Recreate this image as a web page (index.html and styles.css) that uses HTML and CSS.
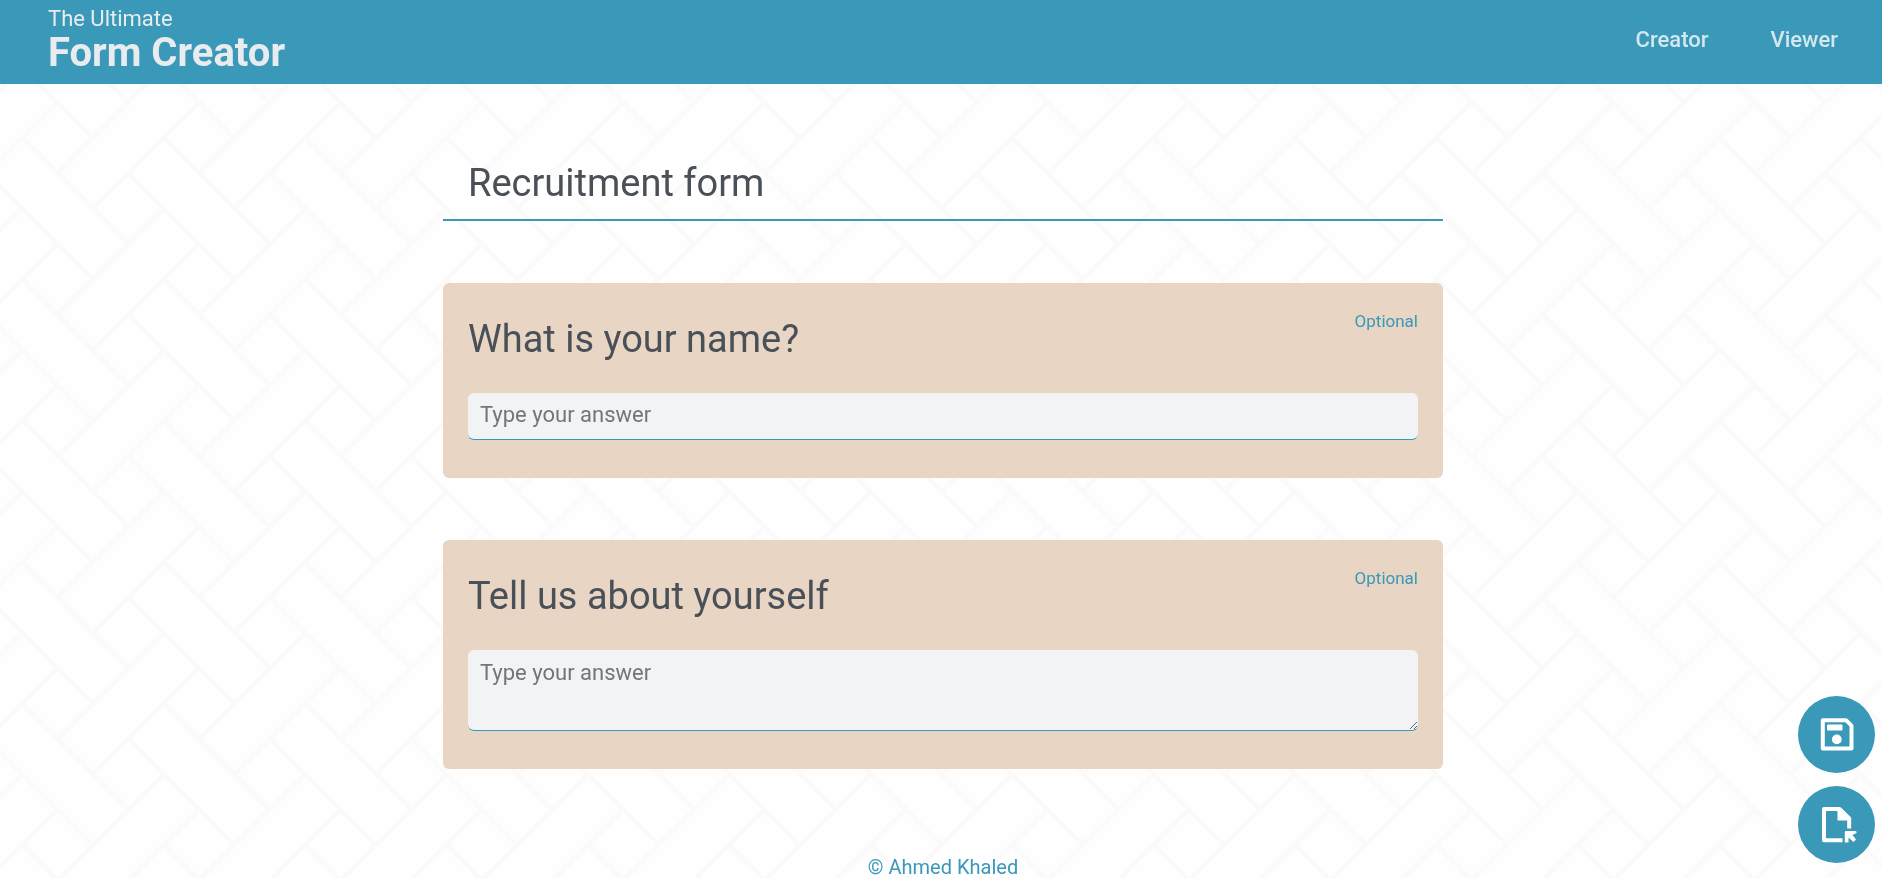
FILE: index.html
```html
<!DOCTYPE html>
<html lang="en">
<head>
<meta charset="utf-8">
<meta name="viewport" content="width=device-width, initial-scale=1">
<title>The Ultimate Form Creator</title>
<link rel="stylesheet" href="styles.css">
</head>
<body>
<svg class="backdrop" aria-hidden="true">
  <defs>
    <pattern id="weave" width="100" height="100" patternUnits="userSpaceOnUse" patternTransform="translate(128.3 31.7) scale(1.41421)">
      <path d="M0 0L75 75M25 75L100 150M25 -25L100 50M-25 25L50 -50M-25 125L50 50M75 25L150 -50M75 125L150 50M-50 100L25 25M50 100L125 25M100 100L175 175" />
    </pattern>
  </defs>
  <rect width="100%" height="100%" fill="url(#weave)" />
</svg>
<header class="header">
  <a class="logo" href="#"><span class="logo-small">The Ultimate</span><span class="logo-big">Form Creator</span></a>
  <nav class="nav"><a href="#">Creator</a><a href="#">Viewer</a></nav>
</header>
<main class="main">
  <form class="form" id="form">
    <h1 class="title">Recruitment form</h1>
    <section class="card">
      <div class="card-head"><label class="question" for="name">What is your name?</label><span class="hint">Optional</span></div>
      <input class="answer" id="name" type="text" placeholder="Type your answer">
    </section>
    <section class="card">
      <div class="card-head"><label class="question" for="about">Tell us about yourself</label><span class="hint">Optional</span></div>
      <textarea class="answer answer-long" id="about" rows="2" placeholder="Type your answer"></textarea>
    </section>
  </form>
</main>
<footer class="footer">© Ahmed Khaled</footer>
<div class="actions">
  <button class="action" type="submit" form="form" aria-label="Save">
    <svg viewBox="0 0 50 50"><path class="line" d="M10.800 10.200H34L39.500 15.700V38.500H10.800Z" /><rect x="15" y="14.500" width="15.500" height="6" rx="1" /><circle cx="24.800" cy="29.400" r="4.900" /></svg>
  </button>
  <button class="action" type="button" aria-label="Export">
    <svg viewBox="0 0 50 50"><path class="line" d="M30.500 40.200H12V9H27.500L37.200 18.500V28.500" /><path d="M25.500 8H29L38.800 18V20.500H25.500Z" /><path d="M34 31H43.500Q44.800 31 44.500 33L40.500 35L44 39.500L41.500 42L36.500 37.500V42.500H32.800V32.200Q32.800 31 34 31Z" /></svg>
  </button>
</div>
</body>
</html>
```
FILE: styles.css
```css
* {
  box-sizing: border-box;
}

body {
  margin: 0;
  background: #fefefe;
  color: #495057;
  font-family: Roboto, "Liberation Sans", sans-serif;
}

.backdrop {
  position: fixed;
  inset: 0;
  z-index: -1;
  width: 100%;
  height: 100%;
}

.backdrop path {
  fill: none;
  stroke: #fafafa;
  stroke-width: 3;
}

.header {
  display: flex;
  justify-content: space-between;
  padding: 5px 44px 11px 48px;
  background: #3a98b9;
}

.logo {
  display: flex;
  flex-direction: column;
  color: #e9ecef;
  text-decoration: none;
}

.logo-small {
  font-size: 22px;
  line-height: 28px;
}

.logo-big {
  font-size: 40px;
  font-weight: 700;
  line-height: 40px;
}

.nav {
  display: flex;
  gap: 62px;
  padding-top: 20px;
}

.nav a {
  color: #d3e7ee;
  font-size: 22px;
  font-weight: 500;
  line-height: 30px;
  text-decoration: none;
}

.main {
  padding: 75px 20px 87px 24px;
}

.form {
  display: flex;
  flex-direction: column;
  gap: 62px;
  max-width: 1000px;
  margin: 0 auto;
}

.title {
  margin: 0;
  padding: 0 25px 12px;
  border-bottom: 2px solid #3a98b9;
  font-size: 38px;
  font-weight: 400;
  line-height: 48px;
}

.card {
  padding: 25px 25px 38px;
  border-radius: 6px;
  background: #e8d5c4;
}

.card-head {
  display: flex;
  align-items: flex-start;
  justify-content: space-between;
  margin-bottom: 30px;
}

.question {
  padding-top: 7px;
  font-size: 38px;
  line-height: 48px;
}

.hint {
  color: #3a98b9;
  font-size: 17px;
  line-height: 26px;
}

.answer {
  display: block;
  width: 100%;
  padding: 8px 12px 10px;
  border: 0;
  border-bottom: 1px solid #3a98b9;
  border-radius: 6px;
  outline: 0;
  background: #f1f3f5;
  color: #495057;
  font: 22px/28px Roboto, "Liberation Sans", sans-serif;
}

.answer::placeholder {
  color: #757575;
}

.answer-long {
  padding: 9px 12px 15px;
  resize: vertical;
}

.footer {
  padding-left: 4px;
  color: #3a98b9;
  font-size: 20px;
  line-height: 22px;
  text-align: center;
}

.actions {
  position: fixed;
  right: 7px;
  bottom: 15px;
  display: grid;
  gap: 13px;
}

.action {
  display: grid;
  place-items: center;
  width: 77px;
  height: 77px;
  padding: 0;
  border: 0;
  border-radius: 50%;
  background: #3a98b9;
}

.action svg {
  width: 50px;
  height: 50px;
  fill: #fff;
}

.action .line {
  fill: none;
  stroke: #fff;
  stroke-width: 4;
  stroke-linejoin: round;
}
```
